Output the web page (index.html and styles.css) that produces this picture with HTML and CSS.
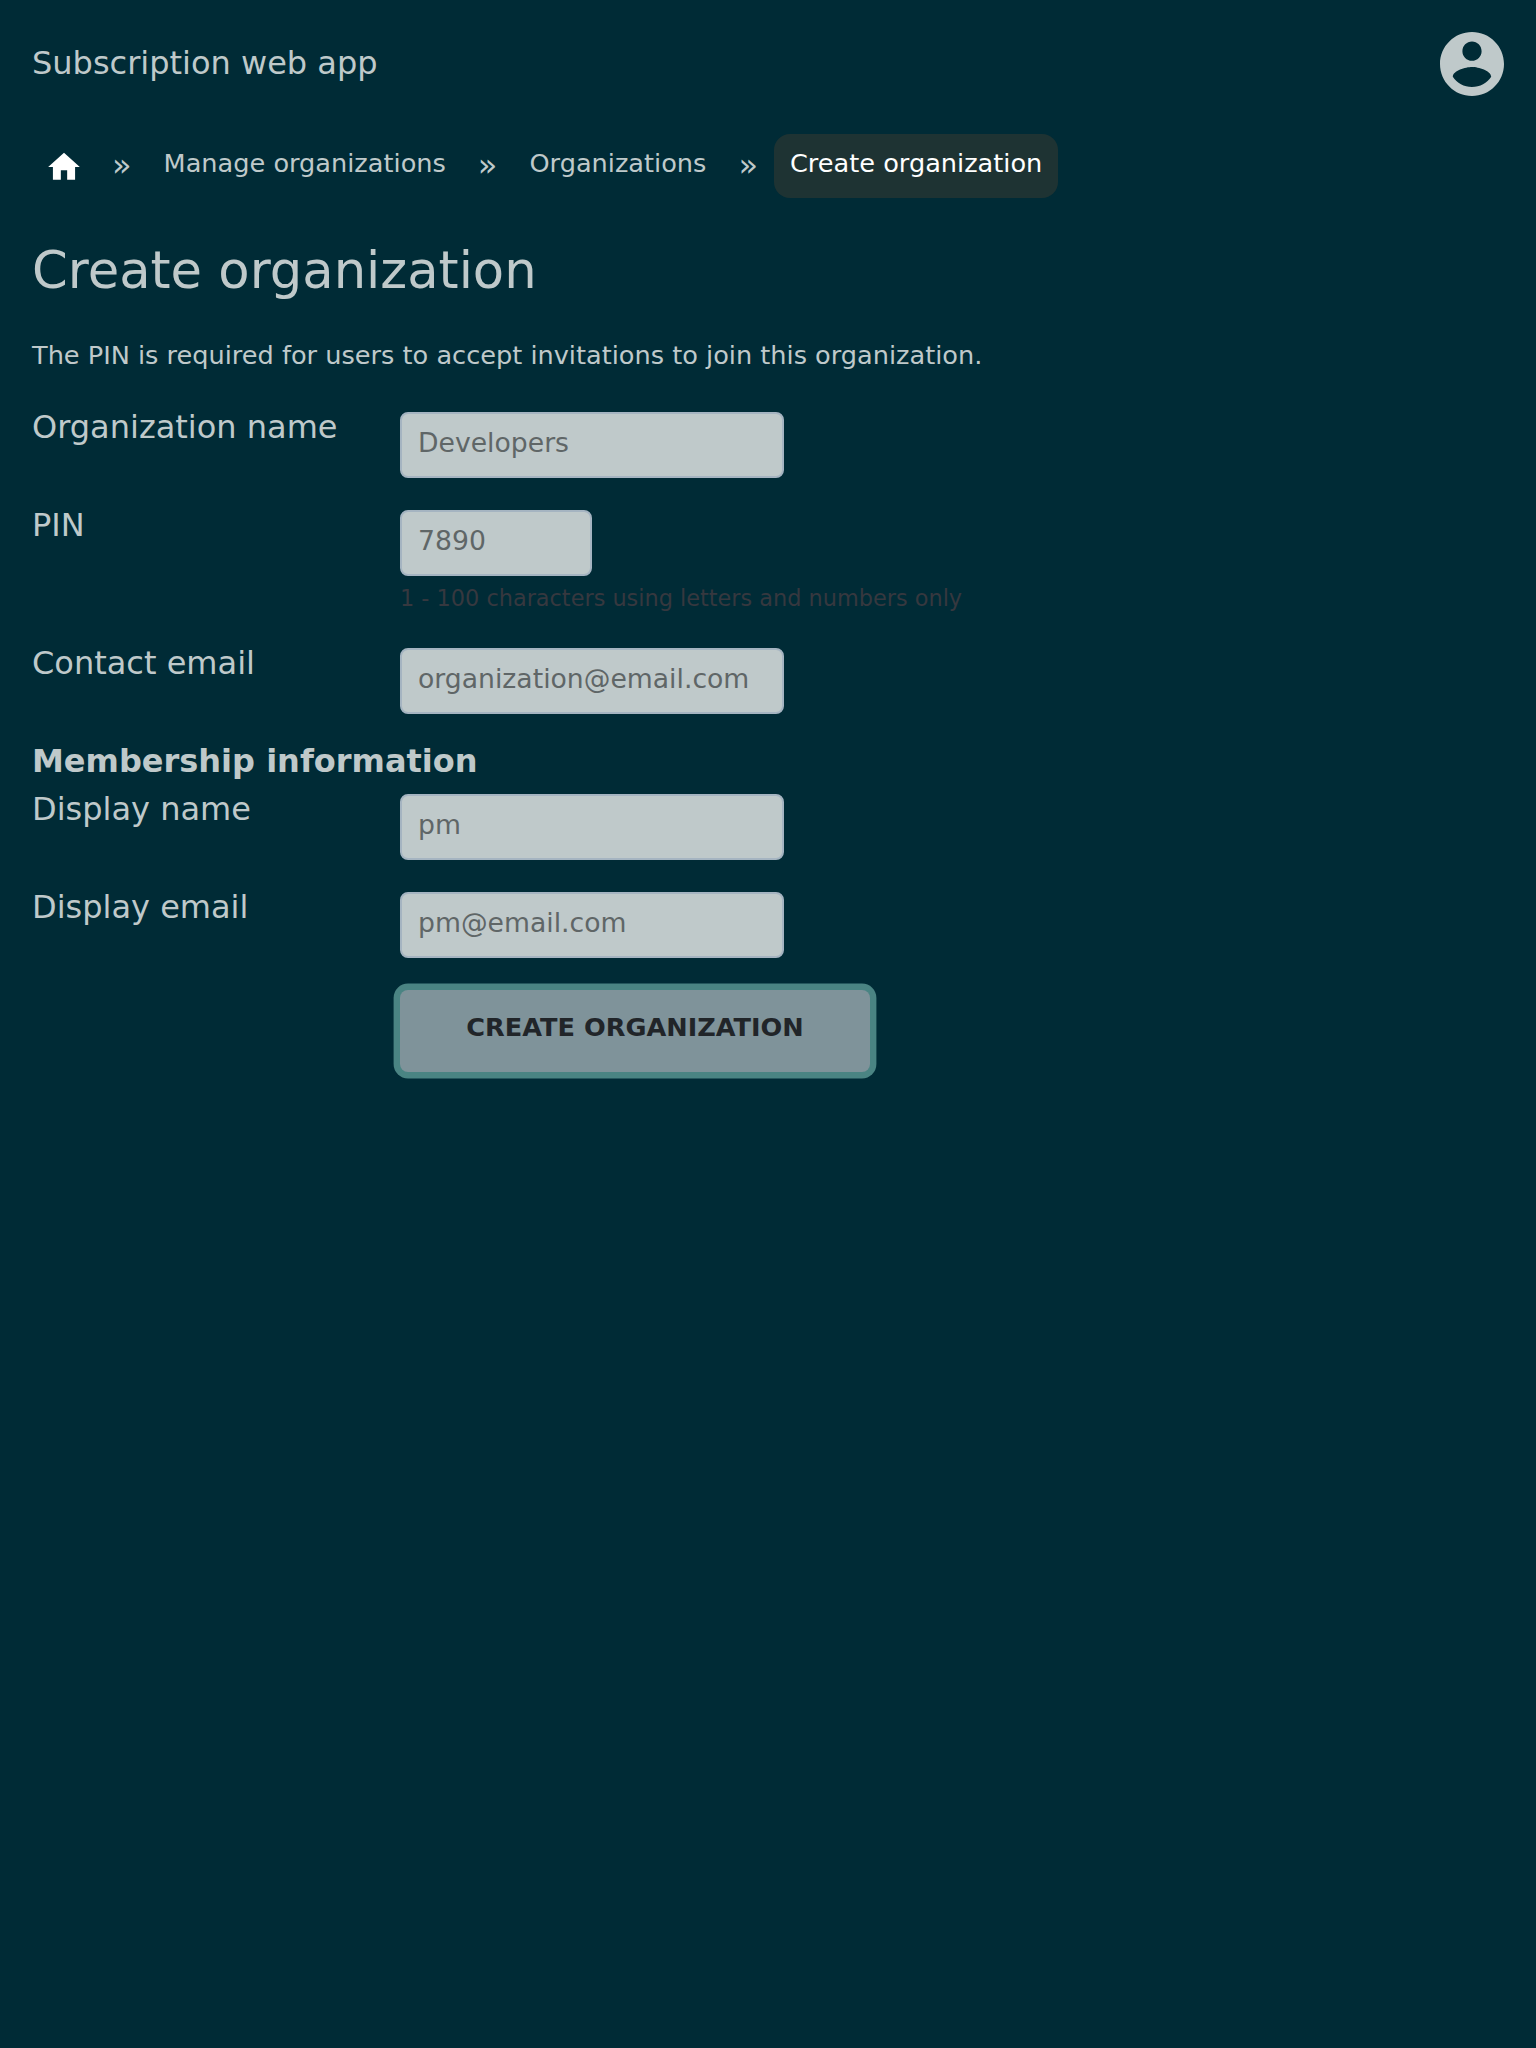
FILE: index.html
```html
<!DOCTYPE html>
<html lang="en">
<head>
<meta charset="utf-8">
<title>Create organization</title>
<link rel="stylesheet" href="styles.css">
</head>
<body>
<header class="topbar">
  <span class="brand">Subscription web app</span>
  <svg class="account" viewBox="2 2 20 20" role="img" aria-label="Account"><path d="M12 2C6.48 2 2 6.48 2 12s4.48 10 10 10 10-4.48 10-10S17.52 2 12 2zm0 3c1.66 0 3 1.34 3 3s-1.34 3-3 3-3-1.34-3-3 1.34-3 3-3zm0 14.2c-2.5 0-4.71-1.28-6-3.22.03-1.99 4-3.08 6-3.08 1.99 0 5.97 1.09 6 3.08-1.29 1.94-3.5 3.22-6 3.22z"/></svg>
</header>
<nav class="crumbs">
  <a class="crumb home" aria-label="Home"><svg class="home-icon" viewBox="0 0 24 24"><path d="M10 20v-6h4v6h5v-8h3L12 3 2 12h3v8z"/></svg></a>
  <span class="sep">»</span>
  <a class="crumb">Manage organizations</a>
  <span class="sep">»</span>
  <a class="crumb">Organizations</a>
  <span class="sep">»</span>
  <a class="crumb current">Create organization</a>
</nav>
<main class="content">
  <h1 class="title">Create organization</h1>
  <p class="intro">The PIN is required for users to accept invitations to join this organization.</p>
  <form class="form">
    <div class="row">
      <label class="label" for="org">Organization name</label>
      <input class="field" id="org" placeholder="Developers">
    </div>
    <div class="row">
      <label class="label" for="pin">PIN</label>
      <div class="stack">
        <input class="field short" id="pin" placeholder="7890">
        <div class="hint">1 - 100 characters using letters and numbers only</div>
      </div>
    </div>
    <div class="row">
      <label class="label" for="contact">Contact email</label>
      <input class="field" id="contact" placeholder="organization@email.com">
    </div>
    <h2 class="subtitle">Membership information</h2>
    <div class="row">
      <label class="label" for="name">Display name</label>
      <input class="field" id="name" placeholder="pm">
    </div>
    <div class="row">
      <label class="label" for="email">Display email</label>
      <input class="field" id="email" placeholder="pm@email.com">
    </div>
    <button class="submit" type="button">CREATE ORGANIZATION</button>
  </form>
</main>
</body>
</html>
```
FILE: styles.css
```css
* { box-sizing: border-box; }
body {
  margin: 0;
  min-height: 2048px;
  background: #002b36;
  color: #bfc9ca;
  font-family: "DejaVu Sans", sans-serif;
  font-size: 32px;
}
.topbar {
  display: flex;
  justify-content: space-between;
  align-items: flex-start;
  height: 134px;
  padding: 32px;
}
.brand { line-height: 63px; }
.account { width: 64px; height: 64px; fill: #bfc9ca; }
.crumbs {
  display: flex;
  gap: 16px;
  height: 64px;
  padding: 0 32px;
}
.crumb {
  padding: 0 16px;
  font-size: 25.6px;
  line-height: 59px;
}
.home {
  display: flex;
  justify-content: center;
  width: 64px;
  padding: 14px 0 0;
}
.home-icon { flex: none; width: 38px; height: 38px; fill: #fff; }
.sep { line-height: 62px; }
.current {
  border-radius: 16px;
  background: #1e3333;
  color: #fff;
}
.content { padding: 40px 32px 0; }
.title {
  margin: 0;
  font-size: 51.2px;
  font-weight: 400;
  line-height: 64px;
}
.intro {
  margin: 35px 0 0;
  font-size: 25.6px;
  line-height: 36px;
}
.form { display: flex; flex-direction: column; padding-top: 39px; }
.row {
  display: grid;
  grid-template-columns: 368px 1fr;
  align-items: start;
  margin-bottom: 32px;
}
.label { line-height: 30px; }
.field {
  display: block;
  width: 384px;
  height: 66px;
  margin: 0;
  padding: 9px 16px 15px;
  border: 2px solid #a5b4c1;
  border-radius: 8px;
  background: #bfc9ca;
  font-family: inherit;
  font-size: 26.66px;
}
.field::placeholder { color: #5f6667; opacity: 1; }
.short { width: 192px; }
.hint {
  margin-top: 6px;
  padding-bottom: 2px;
  color: #36383f;
  font-size: 22.4px;
  line-height: 32px;
}
.subtitle {
  margin: 0 0 18px;
  font-size: 32px;
  line-height: 30px;
}
.submit {
  width: 470px;
  height: 82px;
  margin-left: 368px;
  padding: 0 0 8px;
  border: 0;
  border-radius: 8px;
  background: #7f939a;
  box-shadow: 0 0 0 6.4px #4a8483;
  color: #212529;
  font-family: inherit;
  font-size: 25.6px;
  font-weight: 700;
}
```
